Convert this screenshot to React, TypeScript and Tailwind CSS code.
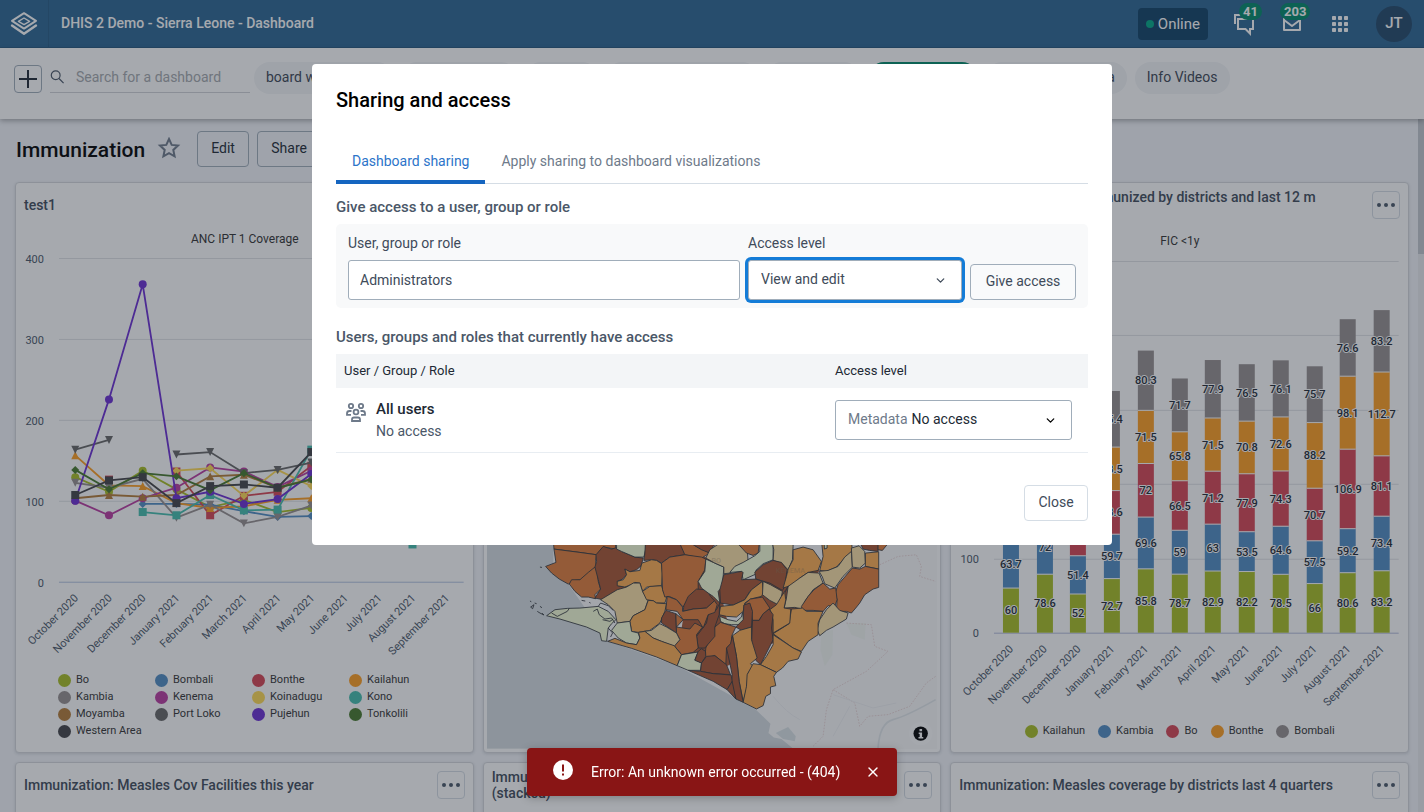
import React from "react";
import { ChevronDown, X } from "lucide-react";

const COLORS = {
  green: "#a8bf24",
  blue: "#518cc3",
  red: "#d74554",
  orange: "#ff9e21",
  grey: "#968f8f",
  magenta: "#ba3ba1",
  yellow: "#ffda54",
  teal: "#45beae",
  brown: "#b57c37",
  slate: "#676767",
  purple: "#6b2dd4",
  forest: "#47792c",
  dark: "#434348",
};

const MONTHS = [
  "October 2020",
  "November 2020",
  "December 2020",
  "January 2021",
  "February 2021",
  "March 2021",
  "April 2021",
  "May 2021",
  "June 2021",
  "July 2021",
  "August 2021",
  "September 2021",
];

type Shape = "circle" | "diamond" | "square" | "up" | "down";
type Series = { name: string; color: string; shape: Shape; values: (number | null)[] };

const LINE_SERIES: Series[] = [
  { name: "Bo", color: COLORS.green, shape: "circle", values: [129, 111, 137, 114, 92, 101, 86, 91] },
  { name: "Bombali", color: COLORS.blue, shape: "diamond", values: [null, null, 96, 96, 95, 87, 80, 81] },
  { name: "Bonthe", color: COLORS.red, shape: "square", values: [null, 126, null, 136, 82, 106, 111, 143] },
  { name: "Kailahun", color: COLORS.orange, shape: "up", values: [156, 119, 118, 97, 91, 93, 101, 103] },
  { name: "Kambia", color: COLORS.grey, shape: "down", values: [122, 116, 127, 79, 95, 72, 80, 94] },
  { name: "Kenema", color: COLORS.magenta, shape: "circle", values: [100, 82, 103, 116, 141, 136, 117, 137] },
  { name: "Koinadugu", color: COLORS.yellow, shape: "diamond", values: [null, null, null, 137, 140, 106, 138, 118] },
  { name: "Kono", color: COLORS.teal, shape: "square", values: [null, null, 86, 82, 107, 88, 89, 163, null, null, 46] },
  { name: "Moyamba", color: COLORS.brown, shape: "up", values: [103, 107, 105, 107, 130, 132, 116, 127] },
  { name: "Port Loko", color: COLORS.slate, shape: "down", values: [163, 175, null, 157, 160, 134, 138, 147] },
  { name: "Pujehun", color: COLORS.purple, shape: "circle", values: [100, 225, 367, 103, 111, 96, 102, 133] },
  { name: "Tonkolili", color: COLORS.forest, shape: "diamond", values: [138, 114, 134, 130, 113, 134, 116, 126] },
  { name: "Western Area", color: COLORS.dark, shape: "square", values: [107, 125, 129, 97, 118, 120, 116, 160] },
];

const BAR_COLORS = [COLORS.green, COLORS.blue, COLORS.red, COLORS.orange, COLORS.grey];
const BAR_NAMES = ["Kailahun", "Kambia", "Bo", "Bonthe", "Bombali"];
const BARS = [
  [60, 63.7, 62, 64, 70],
  [78.6, 72, 65, 66, 72],
  [52, 51.4, 62, 64, 70],
  [72.7, 59.7, 58.6, 58.5, 75.4],
  [85.8, 69.6, 72, 71.5, 80.3],
  [78.7, 59, 66.5, 65.8, 71.7],
  [82.9, 63, 71.2, 71.5, 77.9],
  [82.2, 53.5, 77.9, 70.8, 76.5],
  [78.5, 64.6, 74.3, 72.6, 76.1],
  [66, 57.5, 70.7, 88.2, 75.7],
  [80.6, 59.2, 106.9, 98.1, 76.6],
  [83.2, 73.4, 81.1, 112.7, 83.2],
];

function Marker({ shape, x, y, color }: { shape: Shape; x: number; y: number; color: string }) {
  switch (shape) {
    case "circle":
      return <circle cx={x} cy={y} r={4} fill={color} />;
    case "diamond":
      return <path d={`M${x} ${y - 4}l4 4l-4 4l-4 -4z`} fill={color} />;
    case "square":
      return <rect x={x - 4} y={y - 4} width={8} height={8} fill={color} />;
    case "up":
      return <path d={`M${x} ${y - 4}l4 8h-8z`} fill={color} />;
    default:
      return <path d={`M${x - 4} ${y - 4}h8l-4 8z`} fill={color} />;
  }
}

function AxisMonths({ x0, step, y }: { x0: number; step: number; y: number }) {
  return (
    <g className="fill-[#4a5768] text-[11px]">
      {MONTHS.map((m, i) => {
        const x = x0 + i * step + 3;
        return (
          <text key={m} x={x} y={y} textAnchor="end" transform={`rotate(-45 ${x} ${y})`}>
            {m}
          </text>
        );
      })}
    </g>
  );
}

function LineChart() {
  const px = (i: number) => 75.3 + i * 33.75;
  const py = (v: number) => 582 - v * 0.811;
  return (
    <svg viewBox="16 227 457 437" className="block w-full" role="img" aria-label="ANC IPT 1 Coverage">
      <text x={245} y={243} textAnchor="middle" className="fill-[#333] text-[12px]">
        ANC IPT 1 Coverage
      </text>
      {[0, 100, 200, 300, 400].map((v) => (
        <g key={v}>
          <line x1={59} x2={464} y1={Math.round(py(v)) + 0.5} y2={Math.round(py(v)) + 0.5} stroke={v ? "#e1e3e6" : "#b4c3e0"} />
          <text x={44} y={py(v) + 5} textAnchor="end" className="fill-[#4a5768] text-[11px]">
            {v}
          </text>
        </g>
      ))}
      {LINE_SERIES.map((s) => {
        let d = "";
        s.values.forEach((v, i) => {
          if (v === null) return;
          const joined = i > 0 && s.values[i - 1] !== null;
          d += `${joined ? "L" : "M"}${px(i)} ${py(v)}`;
        });
        return (
          <g key={s.name}>
            <path d={d} fill="none" stroke={s.color} strokeWidth={1.8} />
            {s.values.map((v, i) =>
              v === null ? null : <Marker key={i} shape={s.shape} x={px(i)} y={py(v)} color={s.color} />,
            )}
          </g>
        );
      })}
      <AxisMonths x0={76} step={33.75} y={599} />
    </svg>
  );
}

function BarChart() {
  const base = 633;
  const k = 0.7445;
  return (
    <svg viewBox="951 227 457 492" className="block w-full" role="img" aria-label="FIC <1y">
      <text x={1180} y={245} textAnchor="middle" className="fill-[#333] text-[12px]">
        {"FIC <1y"}
      </text>
      {[0, 100, 200, 300, 400, 500].map((v) => {
        const y = Math.round(base - v * k) + 0.5;
        return (
          <g key={v}>
            <line x1={994} x2={1399} y1={y} y2={y} stroke={v ? "#e1e3e6" : "#b4bcdc"} />
            <text x={979} y={y + 4} textAnchor="end" className="fill-[#4a5768] text-[11px]">
              {v}
            </text>
          </g>
        );
      })}
      {BARS.map((stack, i) => {
        const cx = 1011 + Math.ceil(i * 33.75 - 0.5);
        let total = 0;
        const parts = stack.map((v, j) => {
          const bottom = base - total * k;
          total += v;
          return { v, j, top: base - total * k, bottom };
        });
        return (
          <g key={i}>
            {parts.map((p) => (
              <rect key={p.j} x={cx - 8} y={p.top} width={16} height={p.bottom - p.top} fill={BAR_COLORS[p.j]} />
            ))}
            {parts.slice(1).map((p) => (
              <line key={p.j} x1={cx - 8} x2={cx + 8} y1={p.bottom} y2={p.bottom} stroke="#fff" />
            ))}
            {parts.map((p) => (
              <text
                key={p.j}
                x={cx}
                y={(p.top + p.bottom) / 2 + 4}
                textAnchor="middle"
                stroke="#ffffff"
                strokeWidth={2}
                strokeLinejoin="round"
                paintOrder="stroke"
                className="fill-[#212934] text-[11px] font-medium"
              >
                {p.v}
              </text>
            ))}
          </g>
        );
      })}
      <AxisMonths x0={1011} step={33.75} y={650} />
    </svg>
  );
}

const O = "#e17e3b";
const D = "#a85632";
const G = "#fdad52";
const T = "#fbdfa5";
const P = "#f5fdd7";

/* Chiefdom areas: fill and outline points. */
const AREAS: [string, string][] = [
  [O, "220,0 405,0 408,28 370,22 350,45 300,38 222,28"],
  [O, "222,28 300,38 350,45 347,62 350,85 322,118 285,122 265,133 238,118 215,100 197,80 228,68"],
  [O, "268,133 275,120 300,120 325,98 345,82 353,92 355,125 362,148 345,165 347,177 325,172 305,172 285,155"],
  [D, "348,45 370,20 395,28 415,22 425,35 465,52 490,55 484,78 470,90 450,96 435,88 440,105 428,118 412,125 415,138 440,142 412,155 370,180 345,175 362,148 355,120 345,82 350,65"],
  [P, "410,0 497,0 497,30 492,52 465,52 425,35 410,28"],
  [D, "497,0 600,0 615,45 570,52 545,70 530,62 515,60 492,62 495,40"],
  [O, "595,0 690,0 640,15 690,40 665,55 615,45"],
  [D, "640,0 720,0 700,20 690,40 665,30 645,18"],
  [G, "435,88 450,96 480,92 486,70 515,60 530,62 545,72 548,100 545,138 500,142 488,155 480,130 465,128 455,134 435,142 412,138 412,125 430,120 440,105"],
  [T, "412,150 440,142 460,130 480,130 488,155 505,180 495,210 460,228 450,245 412,250 405,215 385,195 362,180"],
  [G, "488,155 510,140 545,138 552,160 562,168 555,190 530,190 520,183 500,180"],
  [G, "505,182 520,183 530,190 560,192 555,215 540,250 510,272 475,278 455,275 450,245 460,228 495,210"],
  [O, "545,70 570,52 615,45 665,52 678,58 675,90 655,125 655,150 635,162 610,202 590,180 568,170 555,172 548,150"],
  [D, "650,148 680,150 692,170 704,183 680,205 640,208 610,215 612,198 625,170"],
  [P, "678,58 705,70 732,82 728,140 715,155 720,190 700,170 685,160 665,145 655,125 675,95"],
  [T, "690,30 720,10 800,0 805,65 780,75 750,100 732,102 732,82 705,70 678,55"],
  [O, "760,0 840,0 835,40 820,47 800,40 780,18"],
  [P, "840,0 880,15 880,60 850,72 828,92 835,100 790,120 785,95 750,98 765,80 790,68 825,48 840,35"],
  [T, "876,0 940,0 940,20 938,60 925,90 905,70 880,62 882,30"],
  [D, "825,97 850,75 880,62 905,68 922,90 915,140 908,152 870,130 828,118"],
  [D, "732,105 785,95 790,98 785,120 828,118 848,125 810,155 795,180 760,196 722,190 720,150"],
  [G, "722,200 760,196 795,180 815,150 848,125 850,160 845,170 812,178 795,190 790,215 770,232 740,230 718,225"],
  [T, "850,125 872,135 908,155 905,170 895,195 870,182 848,165"],
  [G, "940,30 970,22 1000,30 1025,65 1015,92 985,98 960,115 940,135 910,145 920,110 925,88 940,60"],
  [G, "1025,0 1115,0 1118,35 1095,55 1070,82 1040,95 1020,92 1030,50"],
  [P, "1033,0 1042,0 1042,25 1034,28"],
  [T, "1018,95 1045,92 1075,80 1095,52 1115,35 1118,82 1090,110 1065,145 1035,132 1028,112"],
  [T, "1115,25 1138,18 1155,35 1157,70 1140,85 1118,82"],
  [D, "1137,0 1197,0 1195,35 1170,32 1150,28"],
  [O, "1195,0 1222,15 1208,32 1195,30"],
  [G, "1157,40 1197,36 1197,88 1157,80"],
  [O, "1118,85 1140,88 1157,80 1197,88 1197,143 1180,148 1155,165 1140,190 1128,205 1115,220 1100,215 1070,215 1072,180 1066,160 1075,135"],
  [T, "925,140 960,115 985,98 1018,100 1030,130 1000,150 975,185 968,208 945,203 913,205 920,175"],
  [O, "1030,130 1050,148 1068,145 1072,180 1065,200 1045,198 1030,215 1000,212 968,212 965,200 985,170 1003,150"],
  [T, "1060,190 1080,212 1105,220 1100,238 1060,262 1040,272 1020,288 1012,270 1020,240 1040,210"],
  [G, "935,208 968,205 980,215 1030,215 1015,250 1015,285 985,305 965,335 940,325 880,282 928,252"],
  [G, "925,140 915,160 918,180 913,205 933,208 930,250 880,280 880,240 870,210 890,195 905,170"],
  [O, "812,178 848,172 870,205 845,230 838,242 818,242 815,205 795,192"],
  [D, "818,242 838,242 850,222 868,208 880,225 875,265 880,300 855,350 842,375 828,362 815,320"],
  [G, "880,285 940,325 965,337 955,358 925,365 908,385 890,398 842,375 860,350 880,315"],
  [P, "720,230 745,240 770,245 785,232 788,218 792,240 780,255 755,255 735,252 722,245"],
  [D, "792,196 810,190 818,215 815,262 785,272 768,262 790,240"],
  [G, "758,288 780,272 815,262 815,300 832,355 812,372 820,380 805,400 800,450 790,485 778,425 770,350"],
  [G, "820,372 842,375 890,398 882,410 888,438 872,442 872,462 858,470 850,498 830,508 790,488 800,440 802,405"],
  [O, "705,262 722,248 768,262 755,290 756,310 740,325 738,375 705,348 675,355 678,325"],
  [D, "740,325 752,312 758,288 770,350 778,425 790,488 768,478 755,430 757,405 750,370"],
  [D, "720,190 718,225 705,262 705,290 675,325 655,325 650,290 680,250 685,225 710,210"],
  [O, "562,170 590,180 608,202 608,215 640,208 680,205 704,183 712,195 705,218 685,225 670,265 655,240 610,240 592,215 558,210"],
  [D, "558,212 588,222 590,280 545,250 545,235"],
  [O, "588,222 610,240 590,262 630,268 645,250 668,262 650,285 655,325 640,338 605,345 583,318 600,300 590,280"],
  [T, "495,275 515,272 540,252 560,262 590,280 600,300 583,320 545,305 520,295"],
  [P, "412,250 450,245 455,275 475,280 480,295 470,315 440,310 415,295 395,272"],
  [G, "383,305 405,296 440,310 470,315 480,295 476,278 495,275 520,295 545,305 583,318 605,345 592,378 530,352 455,326"],
  [P, "605,345 655,337 645,360 665,370 662,392 625,392 592,378"],
  [D, "655,335 665,327 677,335 678,350 665,370 645,362"],
  [D, "680,350 705,348 740,375 752,405 700,402 662,395 665,370"],
  [D, "625,392 662,395 700,402 754,406 757,425 742,450 700,425"],
  [D, "757,425 768,478 742,450"],
  [P, "200,228 225,210 262,206 300,205 355,200 385,215 408,240 395,252 385,265 380,305 365,303 360,280 320,262 240,238"],
];

function MapView() {
  return (
    <svg viewBox="487 227 451 522" className="block w-full" role="img" aria-label="Map">
      <rect x={487} y={227} width={451} height={522} fill="#d5dde1" />
      <g transform="translate(480 540) scale(.33333)">
        <path d="M220 -400V68L385 305L592 378L790 488L826 508L872 552L866 580L882 594L905 598L938 625V640H1374V-400z" fill="#fafafb" />
        <path d="M888 580L925 562L948 590L945 605L910 598z" fill="#dbe3e6" />
        <path d="M1025 280L1060 270L1058 345L1035 380L1022 330zM1100 250H1158L1155 300L1115 285z" fill="#f3f7f2" />
        <path d="M640 40L700 60L760 320L880 60L1020 90L900 300L700 400L600 300z" fill={D} />
        <g fill="none" stroke="#ecd9d8" strokeWidth={3} strokeDasharray="5 4">
          <path d="M1200 75L1255 50L1310 45L1325 80L1320 110L1368 125M1100 250L1175 255L1185 320L1225 335L1160 395L1060 450L1040 510L1030 590L1000 620" />
          <path d="M1060 450L1125 490L1140 560L1165 530L1225 525L1290 500L1340 430L1368 410" />
        </g>
        <path d="M1195 625Q1200 550 1240 540T1368 480" fill="none" stroke="#e3e8eb" strokeWidth={5} />
        <path d="M880 470Q920 520 960 540M1060 465L1180 505L1250 490M1060 590L1110 500" fill="none" stroke="#f0f1f3" strokeWidth={3} />
        <g stroke="#33373c" strokeWidth={2.6} strokeLinejoin="round">
          {AREAS.map(([fill, points]) => (
            <polygon key={points} points={points} fill={fill} />
          ))}
          <path
            fill="none"
            d="M215 220L232 230L262 215L268 206M340 215L352 208L358 225L375 238L395 235L405 250M368 240L390 245L400 238M385 265L398 280L392 292M355 200L362 190L385 198L400 212M305 182L316 184M328 188L332 190M150 184L154 186M152 202L162 195L158 207zM164 190L170 192M172 215L180 220L192 226L186 220M180 200L186 204M180 82L186 83"
          />
        </g>
        <g fill="#8d7a5c" fillOpacity={0.35} className="text-[22px] font-medium">
          <text x={695} y={70}>BO</text>
          <text x={888} y={101}>KENEMA</text>
        </g>
      </g>
      <circle cx={921} cy={734} r={12} fill="#ffffff" fillOpacity={0.5} />
      <circle cx={921} cy={734} r={7.2} fill="#000" />
      <path d="M919.8 729.4h2.6v2.2h-2.6zM919 732.8h3.4v4.6h1.2v1.6h-4.8v-1.6h1.2v-3h-1z" fill="#fff" />
    </svg>
  );
}

function MenuButton() {
  return (
    <button
      type="button"
      aria-label="More"
      className="flex h-7 w-7 shrink-0 items-center justify-center rounded-[4px] border border-[#d5dde5]"
    >
      <svg width="18" height="4" viewBox="0 0 18 4" fill="#4a5768">
        <circle cx="2" cy="2" r="2" />
        <circle cx="9" cy="2" r="2" />
        <circle cx="16" cy="2" r="2" />
      </svg>
    </button>
  );
}

function Card({ title, children }: { title: string; children?: React.ReactNode }) {
  return (
    <section className="min-w-0 rounded-[4px] border border-[#d5d8dd] bg-white shadow-[0_1px_3px_rgba(33,41,52,0.15)]">
      <header className="flex h-11 items-center gap-2 px-2">
        <h2 className="min-w-0 flex-1 text-[14px] leading-4 font-medium whitespace-pre-line text-[#404b5a]">{title}</h2>
        <MenuButton />
      </header>
      {children}
    </section>
  );
}

function LegendItem({ name, color }: { name: string; color: string }) {
  return (
    <li className="flex h-[17px] items-center gap-[5px] text-[11px] whitespace-nowrap text-[#333]">
      <svg width="13" height="13" viewBox="0 0 13 13" className="shrink-0">
        <circle cx="6.5" cy="6.5" r="6.5" fill={color} />
      </svg>
      {name}
    </li>
  );
}

const CHIPS = ["board with images", "Antenatal Care", "Delivery", "Disease Surveillance", "HIV and TB"];

function HeaderBar() {
  return (
    <header className="flex h-12 shrink-0 items-center border-b border-[#265a83] bg-[#2c6693] text-white">
      <a href="#home" aria-label="Home" className="flex h-full w-[49px] items-center justify-center border-r border-[#275c85]">
        <svg width="28" height="26" viewBox="0 0 28 26" fill="none" stroke="#fff" strokeWidth="2" strokeLinejoin="round">
          <path d="M14 2.2L26 9.8L14 17.6L2 9.8z" />
          <path d="M14 7L19.6 10.4L14 13.6L8.4 10.4z" strokeWidth="1.4" />
          <path d="M2 14.6L14 22.8L26 14.6" strokeWidth="2.4" strokeLinecap="round" />
        </svg>
      </a>
      <div className="flex-1 px-3 pb-[2px] text-[14px] leading-5 font-medium">DHIS 2 Demo - Sierra Leone - Dashboard</div>
      <div className="mr-6 flex h-8 items-center gap-1 rounded-[4px] bg-[#104167] px-2 text-[15px] leading-5">
        <span className="h-2 w-2 rounded-full bg-[#00a886]" />
        Online
      </div>
      <a href="#interpretations" aria-label="Interpretations" className="relative mr-6 h-6 w-6">
        <svg width="24" height="24" viewBox="0 0 24 24" fill="none" stroke="#fff" strokeWidth="2">
          <path d="M3 12V3H16" />
          <path d="M6 7H21V17H18V21.5L13.5 17H6z" />
        </svg>
        <span className="absolute -top-[9px] left-[7px] rounded-full bg-[#00896a] px-1 text-[13px] leading-[17px] font-bold">41</span>
      </a>
      <a href="#messages" aria-label="Messages" className="relative mr-6 h-6 w-6">
        <svg width="24" height="24" viewBox="0 0 24 24" fill="none" stroke="#fff" strokeWidth="2" strokeLinejoin="round">
          <path d="M4 4H20V18H4z" />
          <path d="M4 8L12 14L20 8" />
        </svg>
        <span className="absolute -top-[9px] left-0 rounded-full bg-[#00896a] px-1 text-[13px] leading-[17px] font-bold">203</span>
      </a>
      <button type="button" aria-label="Apps" className="mr-6 flex h-6 w-6 items-center justify-center">
        <svg width="16" height="16" viewBox="0 0 16 16" fill="#fff">
          {[0, 6, 12].map((y) => [0, 6, 12].map((x) => <rect key={`${x}-${y}`} x={x} y={y} width="4" height="4" rx="0.8" />))}
        </svg>
      </button>
      <button
        type="button"
        aria-label="Profile"
        className="mr-3 flex h-9 w-9 items-center justify-center rounded-full bg-[#22486a] text-[15px] font-medium"
      >
        JT
      </button>
    </header>
  );
}

function DashboardsBar() {
  return (
    <nav className="z-10 flex h-[71px] shrink-0 items-start bg-white pt-[14px] pl-[14px] shadow-[0_2px_5px_rgba(0,0,0,0.3)]">
      <button
        type="button"
        aria-label="Create a dashboard"
        className="mt-[3px] flex h-7 w-7 shrink-0 items-center justify-center rounded-[4px] border border-[#a0adba]"
      >
        <svg width="18" height="18" viewBox="0 0 18 18" stroke="#212934" strokeWidth="2">
          <path d="M9 0V18M0 9H18" />
        </svg>
      </button>
      <div className="mr-1 ml-2 flex h-[31px] w-[200px] shrink-0 items-center gap-3 border-b border-[#d0d3d8]">
        <svg width="14" height="14" viewBox="0 0 14 14" fill="none" stroke="#4a5768" strokeWidth="1.2" className="shrink-0">
          <circle cx="5.7" cy="5.2" r="4.4" />
          <path d="M9 8.5L13.6 13.2" />
        </svg>
        <input
          type="text"
          aria-label="Search for a dashboard"
          placeholder="Search for a dashboard"
          className="w-full min-w-0 bg-transparent text-[14px] leading-5 outline-none placeholder:text-[#a5a9ad]"
        />
      </div>
      <ul className="flex flex-1 gap-2 overflow-hidden text-[14px] leading-[31px] whitespace-nowrap text-[#3c4654]">
        {CHIPS.map((c) => (
          <li key={c} className="h-8 shrink-0 rounded-full bg-[#f3f5f7] px-3">
            {c}
          </li>
        ))}
        <li className="h-8 shrink-0 rounded-full bg-[#00896a] px-3 font-medium text-white">Immunization</li>
        <li className="h-8 shrink-0 rounded-full bg-[#f3f5f7] px-3">Immunization data</li>
        <li className="h-8 shrink-0 rounded-full bg-[#f3f5f7] px-3">Info Videos</li>
      </ul>
    </nav>
  );
}

function SharingDialog() {
  return (
    <div
      role="dialog"
      aria-modal="true"
      aria-labelledby="dialog-title"
      className="flex w-[800px] max-w-full flex-col rounded-[4px] bg-white p-6 text-[14px] leading-5 text-[#404b5a]"
    >
      <h1 id="dialog-title" className="text-[20px] leading-6 font-medium text-black">
        Sharing and access
      </h1>
      <div role="tablist" className="mt-6 flex h-12 border-b border-[#d5dde5]">
        <button
          type="button"
          role="tab"
          aria-selected="true"
          className="-mb-px border-b-4 border-[#1565c0] px-4 pt-[6px] text-[#2c74c9]"
        >
          Dashboard sharing
        </button>
        <button type="button" role="tab" aria-selected="false" className="px-4 pt-[2px] text-[#6e7a8a]">
          Apply sharing to dashboard visualizations
        </button>
      </div>
      <h2 className="mt-[11px] text-[15px] leading-6 font-medium text-[#4a5768]">Give access to a user, group or role</h2>
      <form className="mt-[5px] flex items-end gap-2 rounded-[5px] bg-[#f8f9fa] px-3 pt-[9px] pb-2">
        <div className="flex flex-1 flex-col gap-[7px]">
          <label htmlFor="who">User, group or role</label>
          <input
            id="who"
            type="text"
            defaultValue="Administrators"
            className="h-10 w-full rounded-[3px] border border-[#a0adba] bg-white px-[11px] outline-none"
          />
        </div>
        <div className="flex w-[214px] flex-col gap-[7px]">
          <label htmlFor="level">Access level</label>
          <div className="relative">
            <select
              id="level"
              className="h-10 w-full appearance-none rounded-[3px] border border-[#a0adba] bg-white px-3 pb-[2px] ring-3 ring-[#147cd7] outline-none"
            >
              <option>View and edit</option>
              <option>View only</option>
            </select>
            <ChevronDown size={13} strokeWidth={2.4} className="pointer-events-none absolute top-[14px] right-[15px]" />
          </div>
        </div>
        <button type="button" className="h-9 w-[106px] rounded-[4px] border border-[#a0adba] bg-[#f9fafb] pb-[2px]">
          Give access
        </button>
      </form>
      <h2 className="mt-[17px] text-[15px] leading-6 font-medium text-[#4a5768]">
        Users, groups and roles that currently have access
      </h2>
      <table className="mt-[5px] w-full text-left">
        <thead>
          <tr className="h-[34px] bg-[#f3f5f7] text-[13px] text-[#212934]">
            <th className="px-2 font-normal">User / Group / Role</th>
            <th className="w-[253px] font-normal">Access level</th>
          </tr>
        </thead>
        <tbody>
          <tr className="h-16 border-b border-[#e8edf2]">
            <td className="px-2">
              <div className="flex items-start gap-2">
                <svg width="24" height="24" viewBox="0 0 24 24" fill="none" stroke="#6e7a8a" strokeWidth="1.8" className="mt-[3px]">
                  <circle cx="7" cy="5" r="2.2" />
                  <circle cx="17" cy="5" r="2.2" />
                  <circle cx="12" cy="11" r="2.4" />
                  <path d="M7 13.9H3V12.5Q3 10 5.5 10H7.5M17 13.9H21V12.5Q21 10 18.5 10H16.5" />
                  <path d="M8 20V18.5Q8 16.5 10 16.5H14Q16 16.5 16 18.5V20z" />
                </svg>
                <div className="leading-[22px]">
                  <div className="text-[15px] font-medium text-[#212934]">All users</div>
                  <div className="text-[#4a5768]">No access</div>
                </div>
              </div>
            </td>
            <td>
              <div className="relative flex h-10 w-[237px] items-center rounded-[3px] border border-[#a0adba] pb-px">
                <label htmlFor="metadata" className="pl-3 text-[#6e7a8a]">
                  Metadata
                </label>
                <select id="metadata" className="h-full flex-1 appearance-none bg-transparent pl-1 text-[#212934] outline-none">
                  <option>No access</option>
                  <option>View only</option>
                </select>
                <ChevronDown size={13} strokeWidth={2.4} className="pointer-events-none absolute top-[13px] right-[14px] text-black" />
              </div>
            </td>
          </tr>
        </tbody>
      </table>
      <button type="button" className="mt-8 h-9 w-16 self-end rounded-[4px] border border-[#d5dde5] pb-[2px]">
        Close
      </button>
    </div>
  );
}

export default function App() {
  return (
    <div className="flex h-screen flex-col overflow-hidden bg-[#f3f5fa] font-['Roboto',sans-serif]">
      <HeaderBar />
      <DashboardsBar />
      <main className="flex min-h-0 flex-1">
        <div className="min-w-0 flex-1 overflow-hidden pt-3 pr-[9px] pl-[15px]">
          <div className="mb-[15px] flex h-9 items-center pl-px text-[14px] text-[#212934]">
            <h1 className="pt-1 text-[21px] font-medium text-black">Immunization</h1>
            <button type="button" aria-label="Star dashboard" className="mr-4 ml-3">
              <svg width="24" height="24" viewBox="0 0 24 24" fill="none" stroke="#6e7a8a" strokeWidth="2">
                <path d="M12 2L14.7 7.9L21 8.6L16.3 12.9L17.6 19.3L12 16.1L6.4 19.3L7.7 12.9L3 8.6L9.3 7.9z" />
              </svg>
            </button>
            <button type="button" className="mr-2 h-9 w-[52px] rounded-[4px] border border-[#a0adba] pb-[2px]">
              Edit
            </button>
            <button type="button" className="h-9 w-[64px] rounded-[4px] border border-[#a0adba] pb-[2px]">
              Share
            </button>
          </div>
          <div className="grid grid-cols-3 gap-[9px]">
            <Card title="test1">
              <LineChart />
              <ul className="grid grid-cols-[repeat(4,97px)] pt-2 pb-3 pl-[42px]">
                {LINE_SERIES.map((s) => (
                  <LegendItem key={s.name} name={s.name} color={s.color} />
                ))}
              </ul>
            </Card>
            <Card title="Malaria cases">
              <div className="px-[3px]">
                <MapView />
              </div>
            </Card>
            <Card title={"Immunization: Fully immunized by districts and last 12 m\nonths"}>
              <BarChart />
              <ul className="flex justify-center gap-[13px] pt-1">
                {BAR_NAMES.map((n, i) => (
                  <LegendItem key={n} name={n} color={BAR_COLORS[i]} />
                ))}
              </ul>
            </Card>
            <Card title="Immunization: Measles Cov Facilities this year">
              <div className="h-40" />
            </Card>
            <Card title={"Immunization: Penta and measles coverage\n(stacked)"}>
              <div className="h-40" />
            </Card>
            <Card title="Immunization: Measles coverage by districts last 4 quarters">
              <div className="h-40" />
            </Card>
          </div>
        </div>
        <div className="w-[6px] shrink-0 bg-[#e9ebef]">
          <div className="h-[135px] bg-[#c4c8cf]" />
        </div>
      </main>

      <div className="fixed inset-0 z-20 flex items-start justify-center bg-[rgba(33,41,52,0.4)] pt-16">
        <SharingDialog />
      </div>

      <div className="fixed inset-x-0 bottom-4 z-30 flex justify-center">
        <div
          role="alert"
          className="flex h-12 w-[370px] items-center rounded-[4px] bg-[#891515] pr-4 pl-6 text-[14px] text-white shadow-[0_2px_8px_rgba(0,0,0,0.25)]"
        >
          <svg width="24" height="24" viewBox="0 0 24 24" className="mr-4">
            <circle cx="12" cy="10" r="10" fill="#fff" />
            <path d="M11 4.5h2v7h-2zM11 13.5h2v2h-2z" fill="#891515" />
          </svg>
          <span className="flex-1">Error: An unknown error occurred - (404)</span>
          <button type="button" aria-label="Dismiss">
            <X size={16} strokeWidth={2} />
          </button>
        </div>
      </div>
    </div>
  );
}
